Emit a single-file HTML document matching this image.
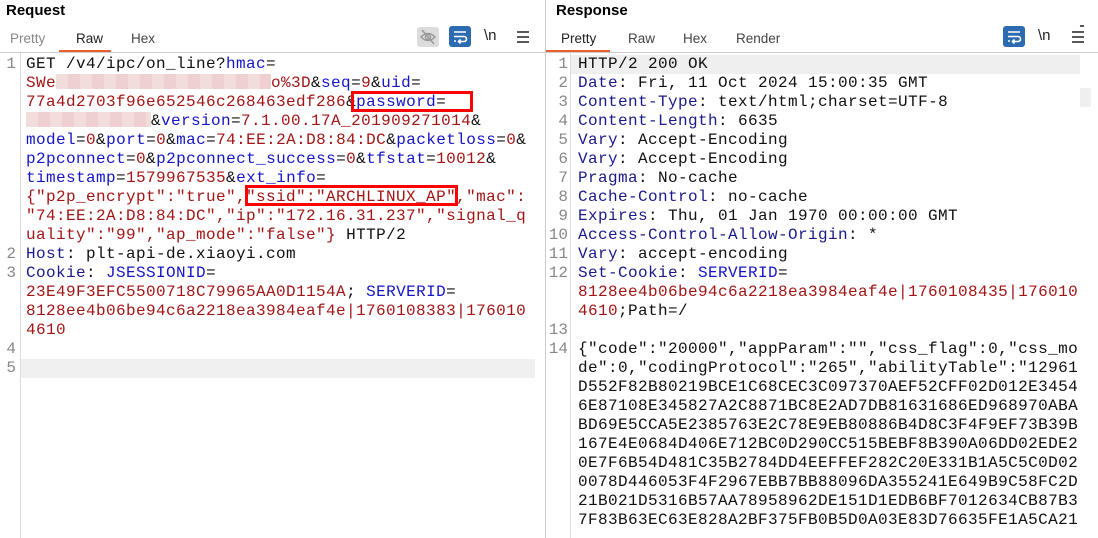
<!DOCTYPE html>
<html><head><meta charset="utf-8"><style>
*{margin:0;padding:0;box-sizing:border-box}
body{width:1098px;height:538px;background:#fff;position:relative;overflow:hidden;font-family:"Liberation Sans",sans-serif}
.abs{position:absolute}
.title{font-weight:bold;font-size:15px;color:#000;top:2px}
.tab{font-size:13.5px;color:#444;top:31px}
.code{font-family:"Liberation Mono",monospace;font-size:16px;letter-spacing:0.4px;line-height:19px;white-space:pre;color:#111}
.ln{font-family:"Liberation Mono",monospace;font-size:16px;line-height:19px;color:#888;text-align:right;white-space:pre}
.b{color:#1515c8}.r{color:#a31515}.n{color:#1a1a8c}
.pk{display:inline-block;height:15px;vertical-align:-2px;background:repeating-linear-gradient(90deg,#f3dcdc 0 12px,#eed0d0 12px 24px)}
.box{border:3px solid #f00}
</style></head><body>
<!-- Left panel -->
<div class="abs title" style="left:6px">Request</div>
<div class="abs tab" style="left:10px;color:#888">Pretty</div>
<div class="abs tab" style="left:76px;color:#222">Raw</div>
<div class="abs" style="left:59px;top:50px;width:52px;height:3px;background:#e8612c"></div>
<div class="abs tab" style="left:131px">Hex</div>
<div class="abs" style="left:417px;top:27px;width:22px;height:20px;background:#dcdcdc;border-radius:3px"></div>
<svg class="abs" style="left:417px;top:27px" width="22" height="20"><path d="M4 10 Q11 3 18 10 Q11 17 4 10Z" fill="none" stroke="#999" stroke-width="1.5"/><circle cx="11" cy="10" r="2.5" fill="none" stroke="#999" stroke-width="1.5"/><path d="M5 3 L17 17" stroke="#999" stroke-width="1.5"/></svg>
<div class="abs" style="left:449px;top:26px;width:22px;height:21px;background:#2d6bb0;border-radius:3px"></div>
<svg class="abs" style="left:449px;top:26px" width="22" height="21"><path d="M5 6H17M5 10.5H15a2.5 2.5 0 0 1 0 5H10M5 15H7M11.5 13.5L9.5 15.5L11.5 17.5" fill="none" stroke="#fff" stroke-width="1.6"/></svg>
<div class="abs" style="left:484px;top:27px;font-size:15px;color:#222">\n</div>
<svg class="abs" style="left:516px;top:30px" width="14" height="14"><path d="M1 2H13M1 7H13M1 12H13" stroke="#222" stroke-width="1.6"/></svg>
<div class="abs" style="left:0;top:52px;width:545px;height:1px;background:#c9ced2"></div>
<div class="abs" style="left:20px;top:53px;width:1px;height:485px;background:#ddd"></div>
<div class="abs" style="left:21px;top:359px;width:514px;height:19px;background:#f0f0f0"></div>
<div class="abs ln" style="left:0;top:55px;width:16px">1









2
3



4
5</div>
<div class="abs code" style="left:26px;top:55px">GET /v4/ipc/on_line?<span class="b">hmac</span>=
<span class="r">SWe</span><span class="pk" style="width:215px"></span><span class="r">o%3D</span>&amp;<span class="b">seq</span>=<span class="r">9</span>&amp;<span class="b">uid</span>=
<span class="r">77a4d2703f96e652546c268463edf286</span>&amp;<span class="b">password</span>=
<span class="pk" style="width:125px"></span>&amp;<span class="b">version</span>=<span class="r">7.1.00.17A_201909271014</span>&amp;
<span class="b">model</span>=<span class="r">0</span>&amp;<span class="b">port</span>=<span class="r">0</span>&amp;<span class="b">mac</span>=<span class="r">74:EE:2A:D8:84:DC</span>&amp;<span class="b">packetloss</span>=<span class="r">0</span>&amp;
<span class="b">p2pconnect</span>=<span class="r">0</span>&amp;<span class="b">p2pconnect_success</span>=<span class="r">0</span>&amp;<span class="b">tfstat</span>=<span class="r">10012</span>&amp;
<span class="b">timestamp</span>=<span class="r">1579967535</span>&amp;<span class="b">ext_info</span>=
<span class="r">{"p2p_encrypt":"true","ssid":"ARCHLINUX_AP","mac":
"74:EE:2A:D8:84:DC","ip":"172.16.31.237","signal_q
uality":"99","ap_mode":"false"}</span> HTTP/2
<span class="n">Host</span>: plt-api-de.xiaoyi.com
<span class="n">Cookie</span>: <span class="b">JSESSIONID</span>=
<span class="r">23E49F3EFC5500718C79965AA0D1154A</span>; <span class="b">SERVERID</span>=
<span class="r">8128ee4b06be94c6a2218ea3984eaf4e|1760108383|176010
4610</span></div>
<div class="abs box" style="left:351px;top:91px;width:122px;height:21px"></div>
<div class="abs box" style="left:245px;top:185px;width:213px;height:21px"></div>
<div class="abs" style="left:545px;top:0;width:1px;height:538px;background:#ccc"></div>
<!-- Right panel -->
<div class="abs title" style="left:556px">Response</div>
<div class="abs tab" style="left:561px;color:#222">Pretty</div>
<div class="abs" style="left:546px;top:50px;width:64px;height:3px;background:#e8612c"></div>
<div class="abs tab" style="left:628px">Raw</div>
<div class="abs tab" style="left:683px">Hex</div>
<div class="abs tab" style="left:736px">Render</div>
<div class="abs" style="left:1003px;top:26px;width:22px;height:21px;background:#2d6bb0;border-radius:3px"></div>
<svg class="abs" style="left:1003px;top:26px" width="22" height="21"><path d="M5 6H17M5 10.5H15a2.5 2.5 0 0 1 0 5H10M5 15H7M11.5 13.5L9.5 15.5L11.5 17.5" fill="none" stroke="#fff" stroke-width="1.6"/></svg>
<div class="abs" style="left:1038px;top:27px;font-size:15px;color:#222">\n</div>
<svg class="abs" style="left:1071px;top:24px" width="16" height="20"><path d="M1 8H13M1 13H13M1 18H13M9 2H13" stroke="#222" stroke-width="1.6"/></svg>
<div class="abs" style="left:546px;top:52px;width:552px;height:1px;background:#c9ced2"></div>
<div class="abs" style="left:570px;top:53px;width:1px;height:485px;background:#ddd"></div>
<div class="abs" style="left:571px;top:55px;width:509px;height:19px;background:#efefef"></div>
<div class="abs" style="left:1080px;top:88px;width:11px;height:19px;background:#efefef"></div>
<div class="abs ln" style="left:548px;top:55px;width:20px">1
2
3
4
5
6
7
8
9
10
11
12


13
14</div>
<div class="abs code" style="left:578px;top:55px">HTTP/2 200 OK
<span class="n">Date</span>: Fri, 11 Oct 2024 15:00:35 GMT
<span class="n">Content-Type</span>: text/html;charset=UTF-8
<span class="n">Content-Length</span>: 6635
<span class="n">Vary</span>: Accept-Encoding
<span class="n">Vary</span>: Accept-Encoding
<span class="n">Pragma</span>: No-cache
<span class="n">Cache-Control</span>: no-cache
<span class="n">Expires</span>: Thu, 01 Jan 1970 00:00:00 GMT
<span class="n">Access-Control-Allow-Origin</span>: *
<span class="n">Vary</span>: accept-encoding
<span class="n">Set-Cookie</span>: <span class="b">SERVERID</span>=
<span class="r">8128ee4b06be94c6a2218ea3984eaf4e|1760108435|176010
4610</span>;Path=/

{"code":"20000","appParam":"","css_flag":0,"css_mo
de":0,"codingProtocol":"265","abilityTable":"12961
D552F82B80219BCE1C68CEC3C097370AEF52CFF02D012E3454
6E87108E345827A2C8871BC8E2AD7DB81631686ED968970ABA
BD69E5CCA5E2385763E2C78E9EB80886B4D8C3F4F9EF73B39B
167E4E0684D406E712BC0D290CC515BEBF8B390A06DD02EDE2
0E7F6B54D481C35B2784DD4EEFFEF282C20E331B1A5C5C0D02
0078D446053F4F2967EBB7BB88096DA355241E649B9C58FC2D
21B021D5316B57AA78958962DE151D1EDB6BF7012634CB87B3
7F83B63EC63E828A2BF375FB0B5D0A03E83D76635FE1A5CA21</div>
</body></html>
